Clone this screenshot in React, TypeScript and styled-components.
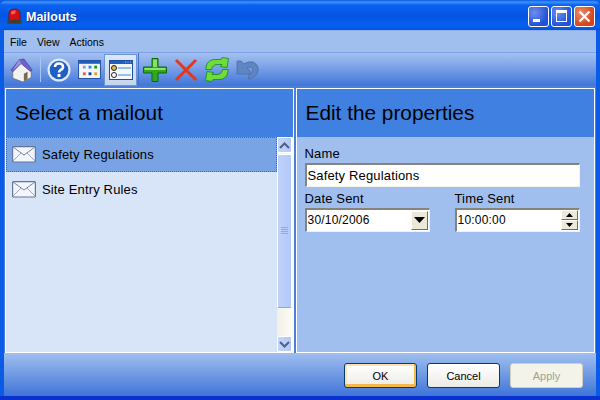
import React from "react";
import styled, { createGlobalStyle } from "styled-components";

const Global = createGlobalStyle`
  html, body { margin: 0; padding: 0; background: #0a5ce6; }
  * { box-sizing: border-box; }
`;

const App = () => {
  return (
    <>
      <Global />
      <Win>
        <TitleBar>
          <Beacon />
          <TitleText>Mailouts</TitleText>
          <Caps>
            <Cap>
              <svg width="21" height="21" viewBox="0 0 21 21">
                <rect x="5" y="13" width="7" height="3" fill="#fff" />
              </svg>
            </Cap>
            <Cap>
              <svg width="21" height="21" viewBox="0 0 21 21">
                <rect x="5.5" y="4.5" width="10" height="11" fill="none" stroke="#fff" strokeWidth="1" />
                <rect x="5" y="4" width="11" height="3" fill="#fff" />
              </svg>
            </Cap>
            <Cap $close>
              <svg width="21" height="21" viewBox="0 0 21 21">
                <path d="M5.5 5.5 L15.5 15.5 M15.5 5.5 L5.5 15.5" stroke="#fff" strokeWidth="2.4" />
              </svg>
            </Cap>
          </Caps>
        </TitleBar>
        <Client>
          <MenuBar>
            <MenuItem>File</MenuItem>
            <MenuItem>View</MenuItem>
            <MenuItem>Actions</MenuItem>
          </MenuBar>
          <ToolBar>
            <ToolGroup>
              <ToolBtn><HomeIcon /></ToolBtn>
              <Sep />
              <ToolBtn><HelpIcon /></ToolBtn>
              <ToolBtn><GridIcon /></ToolBtn>
              <ToolBtn $on><FormIcon /></ToolBtn>
            </ToolGroup>
            <ToolGroup>
              <ToolBtn><PlusIcon /></ToolBtn>
              <ToolBtn><CrossIcon /></ToolBtn>
              <ToolBtn><RefreshIcon /></ToolBtn>
              <ToolBtn><UndoIcon /></ToolBtn>
            </ToolGroup>
          </ToolBar>
          <Panels>
            <LeftPanel>
              <Heading>Select a mailout</Heading>
              <ListWrap>
                <List>
                  <Row $selected>
                    <Envelope />
                    <span>Safety Regulations</span>
                  </Row>
                  <Row>
                    <Envelope />
                    <span>Site Entry Rules</span>
                  </Row>
                </List>
                <Scroll>
                  <ScrollBtn>
                    <svg width="13" height="9" viewBox="0 0 13 9">
                      <path d="M2 7 L6.5 2.5 L11 7" fill="none" stroke="#4d6185" strokeWidth="2" />
                    </svg>
                  </ScrollBtn>
                  <Thumb>
                    <svg width="7" height="8" viewBox="0 0 7 8">
                      <path d="M0 .5H7M0 2.5H7M0 4.5H7M0 6.5H7" stroke="#8fa9ec" strokeWidth="1" />
                    </svg>
                  </Thumb>
                  <Track />
                  <ScrollBtn>
                    <svg width="13" height="9" viewBox="0 0 13 9">
                      <path d="M2 2 L6.5 6.5 L11 2" fill="none" stroke="#4d6185" strokeWidth="2" />
                    </svg>
                  </ScrollBtn>
                </Scroll>
              </ListWrap>
            </LeftPanel>
            <RightPanel>
              <Heading>Edit the properties</Heading>
              <Form>
                <Label>Name</Label>
                <Field $mb={5}>Safety Regulations</Field>
                <TwoCols>
                  <div>
                    <Label>Date Sent</Label>
                    <Field>
                      <Digits>30/10/2006</Digits>
                      <DropBtn>
                        <svg width="11" height="6" viewBox="0 0 11 6">
                          <path d="M0 0H11L5.5 6Z" fill="#000" />
                        </svg>
                      </DropBtn>
                    </Field>
                  </div>
                  <div>
                    <Label>Time Sent</Label>
                    <Field>
                      <Digits>10:00:00</Digits>
                      <Spin>
                        <SpinBtn>
                          <svg width="7" height="4" viewBox="0 0 7 4">
                            <path d="M0 4H7L3.5 0Z" fill="#000" />
                          </svg>
                        </SpinBtn>
                        <SpinBtn>
                          <svg width="7" height="4" viewBox="0 0 7 4">
                            <path d="M0 0H7L3.5 4Z" fill="#000" />
                          </svg>
                        </SpinBtn>
                      </Spin>
                    </Field>
                  </div>
                </TwoCols>
              </Form>
            </RightPanel>
          </Panels>
          <Footer>
            <Btn $variant="default">OK</Btn>
            <Btn>Cancel</Btn>
            <Btn $variant="disabled">Apply</Btn>
          </Footer>
        </Client>
      </Win>
    </>
  );
};

export default App;

const Beacon = () => (
  <svg width="17" height="17" viewBox="0 0 17 18" style={{ flex: "none" }}>
    <path d="M2.5 13 V7 Q2.5 1 8.5 1 Q14.5 1 14.5 7 V13 Z" fill="#d41010" stroke="#5a0808" strokeWidth=".6" />
    <path d="M5 4 Q7 2 10 3 L9 6 L5 7 Z" fill="#f46060" />
    <path d="M.5 13 H16.5 L16 17 H1 Z" fill="#3f4a28" />
    <path d="M3 14 H14 V15 H3 Z" fill="#8b1010" />
  </svg>
);

const HomeIcon = () => (
  <svg width="24" height="24" viewBox="1 0 24 26">
    <path d="M3 13 L3 22 L14 26 L23 21 L23 13 L13 5 Z" fill="#f2f2f2" stroke="#666" strokeWidth=".8" />
    <path d="M15 17 L19 15 V23 L15 25 Z" fill="#7a6a50" />
    <path d="M1 13 L10 2 L15 1 L24 13 L22 14.5 L12 6 L3 15 Z" fill="#6f63c9" stroke="#4a4795" strokeWidth=".8" />
    <path d="M3 13 L12 6 L10 2 Z" fill="#9a91e0" />
  </svg>
);

const HelpIcon = () => (
  <svg width="24" height="24" viewBox="0 0 24 24">
    <circle cx="12" cy="12" r="11.5" fill="#dfe8f8" />
    <circle cx="12" cy="12" r="9.3" fill="#1f5fc4" />
    <path d="M8 9 Q8 5.5 12 5.5 Q16 5.5 16 9 Q16 11 13.5 12 Q12 13 12 14.5" fill="none" stroke="#fff" strokeWidth="2.6" />
    <rect x="10.5" y="16" width="3" height="3" fill="#fff" />
  </svg>
);

const GridIcon = () => (
  <svg width="23" height="19" viewBox="0 0 24 20">
    <rect x=".5" y=".5" width="23" height="19" fill="#f4f6fb" stroke="#1d4ea0" />
    <rect x="1" y="1" width="22" height="3" fill="#1d5fc0" />
    <rect x="5" y="6" width="3" height="3" fill="#9a9ad0" />
    <rect x="11" y="6" width="3" height="3" fill="#2f8fd0" />
    <rect x="17" y="6" width="3" height="3" fill="#12a020" />
    <rect x="5" y="13" width="3" height="3" fill="#e85a30" />
    <rect x="11" y="13" width="3" height="3" fill="#1a3f9a" />
    <rect x="17" y="13" width="3" height="3" fill="#e0a018" />
  </svg>
);

const FormIcon = () => (
  <svg width="24" height="20" viewBox="0 0 24 20">
    <rect x=".5" y=".5" width="23" height="19" fill="#f4f6fb" stroke="#1d4ea0" />
    <rect x="1" y="1" width="22" height="3" fill="#1d5fc0" />
    <path d="M16 2H17M18.5 2H19.5M21 2H22" stroke="#9fc0f0" />
    <circle cx="5" cy="8" r="2.5" fill="#e0c030" stroke="#222" />
    <circle cx="5" cy="15" r="2.5" fill="#fff" stroke="#222" />
    <path d="M9 8H22M9 15H22" stroke="#2f8fe0" strokeWidth="1" />
  </svg>
);

const PlusIcon = () => (
  <svg width="24" height="24" viewBox="0 0 24 24">
    <path d="M9 .5H15V9H23.5V15H15V23.5H9V15H.5V9H9Z" fill="#2fa81f" stroke="#0a6a10" />
    <path d="M10 1.5H14V9H10ZM1.5 10H22.5V12H1.5Z" fill="#8fe06a" />
  </svg>
);

const CrossIcon = () => (
  <svg width="24" height="24" viewBox="0 0 24 24">
    <path d="M2 2 L22 22 M22 2 L2 22" stroke="#e8361a" strokeWidth="3" />
  </svg>
);

const RefreshIcon = () => (
  <svg width="24" height="25" viewBox="0 0 24 24">
    <path d="M.8 12 C1 5 5 2 10 2 H16 L17 0 L23.5 1 L22 10 L15.5 9 L17 7 H12 C9 7 7 9 6.5 12 Z" fill="#6fdc3c" stroke="#0e8a20" strokeWidth=".8" />
    <path d="M.8 12 C1 5 5 2 10 2 H16 L17 0 L23.5 1 L22 10 L15.5 9 L17 7 H12 C9 7 7 9 6.5 12 Z" transform="rotate(180 12 12)" fill="#6fdc3c" stroke="#0e8a20" strokeWidth=".8" />
  </svg>
);

const UndoIcon = () => (
  <svg width="24" height="20" viewBox="0 0 24 20">
    <path d="M1 1 H5 L8 4 Q12 1 17 2 Q23 5 22 11 Q20 18 12 19 L13 15 Q17 13 17 9 Q15 6 11 8 L14 11 V14 H1 Z" fill="#5f86c0" stroke="#4c6f9f" strokeWidth=".8" />
  </svg>
);

const Envelope = () => (
  <svg width="24" height="17" viewBox="0 0 24 17" style={{ flex: "none" }}>
    <rect x=".6" y=".6" width="22.8" height="15.4" rx="1" fill="#f3f6fc" stroke="#66769a" strokeWidth="1.2" />
    <path d="M1 1 L12 9 L23 1" fill="none" stroke="#7a88a6" />
    <path d="M1 15 L9 7 M23 15 L15 7" fill="none" stroke="#9aa6bc" />
  </svg>
);

const Win = styled.div`
  width: 600px;
  height: 400px;
  display: flex;
  flex-direction: column;
  overflow: hidden;
  border-radius: 7px 7px 0 0;
  background: linear-gradient(to bottom, #0a5ce6 0, #0a5ce6 396px, #0831d0 396px);
  font-family: "Liberation Sans", Arial, sans-serif;
`;

const TitleBar = styled.div`
  height: 30px;
  flex: none;
  display: flex;
  align-items: center;
  padding: 3px 5px 0 6px;
  background: linear-gradient(
    to bottom,
    #0a58e0 0,
    #3d93fb 2px,
    #0a62ee 5px,
    #0455e2 16px,
    #0661f0 26px,
    #0453d8 30px
  );
`;

const TitleText = styled.div`
  margin-left: 3px;
  color: #fff;
  font-size: 12.5px;
  font-weight: bold;
  text-shadow: 1px 1px 0 #0f2f9a;
`;

const Caps = styled.div`
  margin: -1px 0 0 auto;
  display: flex;
  gap: 2px;
`;

const Cap = styled.div<{ $close?: boolean }>`
  width: 21px;
  height: 21px;
  border: 1px solid #fff;
  border-radius: 3px;
  display: flex;
  align-items: center;
  justify-content: center;
  background: ${(p) =>
    p.$close
      ? "radial-gradient(circle at 30% 30%, #ee8a68, #d5431c 70%)"
      : "radial-gradient(circle at 30% 30%, #6a8ff0, #2350d8 70%)"};
  svg {
    margin: -1px;
    flex: none;
  }
`;

const Client = styled.div`
  flex: 1;
  min-height: 0;
  margin: 0 4px 4px;
  display: flex;
  flex-direction: column;
  background: #4a7fdc;
`;

const MenuBar = styled.div`
  height: 22px;
  flex: none;
  display: flex;
  align-items: center;
  padding: 0 0 0 6px;
  gap: 10px;
  background: #a1bfee;
  border-top: 1px solid #8fb0e8;
`;

const MenuItem = styled.span`
  font-size: 10.5px;
  color: #000;
`;

const ToolBar = styled.div`
  height: 34px;
  flex: none;
  display: flex;
  background: linear-gradient(to bottom, #a3c0f0 0, #7fa4e8 40%, #3f76d8 100%);
  border-top: 1px solid #7ea2e4;
`;

const ToolGroup = styled.div`
  display: flex;
  align-items: center;
  padding: 0 2px;
  border-right: 1px solid #3f6fc8;
  &:last-child {
    border-right: 0;
    padding-left: 0;
  }
`;

const ToolBtn = styled.div<{ $on?: boolean }>`
  width: 31px;
  height: 30px;
  display: flex;
  align-items: center;
  justify-content: center;
  background: ${(p) =>
    p.$on ? "linear-gradient(to bottom, #dbe7f9, #c6d5ee)" : "transparent"};
  outline: ${(p) => (p.$on ? "1px solid #6c96dc" : "none")};
`;

const Sep = styled.div`
  width: 1px;
  height: 25px;
  margin: 0 2px 0 3px;
  background: #a9c4f0;
`;

const Panels = styled.div`
  flex: 1;
  min-height: 0;
  display: flex;
  gap: 2px;
  padding: 2px 1px 0 1px;
`;

const LeftPanel = styled.div`
  width: 289px;
  display: flex;
  flex-direction: column;
  border: 1px solid #fff;
  background: #d8e5f9;
`;

const RightPanel = styled(LeftPanel)`
  width: 300px;
  background: #a0bfee;
`;

const Heading = styled.div`
  height: 48px;
  flex: none;
  display: flex;
  align-items: center;
  padding-left: 9px;
  background: #3f80e0;
  color: #000;
  font-size: 20.8px;
`;

const ListWrap = styled.div`
  flex: 1;
  min-height: 0;
  display: flex;
`;

const List = styled.div`
  flex: 1;
  min-width: 0;
`;

const Row = styled.div<{ $selected?: boolean }>`
  height: 35px;
  display: flex;
  align-items: center;
  gap: 6px;
  padding-left: 6px;
  font-size: 13px;
  letter-spacing: 0.15px;
  color: #000;
  background: ${(p) => (p.$selected ? "#78a4e6" : "transparent")};
  outline: ${(p) => (p.$selected ? "1px dotted #a0522d" : "none")};
  outline-offset: -1px;
`;

const Scroll = styled.div`
  width: 16px;
  flex: none;
  display: flex;
  flex-direction: column;
  background: linear-gradient(to right, #f0f0e6, #fdfdf8);
`;

const ScrollBtn = styled.div`
  height: 16px;
  flex: none;
  margin-right: 1px;
  display: flex;
  align-items: center;
  justify-content: center;
  border: 1px solid #fff;
  border-radius: 2px;
  background: linear-gradient(to right, #c5d5fb, #b4c8f4);
`;

const Thumb = styled.div`
  height: 154px;
  flex: none;
  margin: 1px 1px 0 0;
  display: flex;
  align-items: center;
  justify-content: center;
  border: 1px solid #fff;
  border-bottom: 1px solid #8ea6e0;
  border-radius: 2px;
  background: linear-gradient(to right, #c0d2fb, #b2c8f8);
`;

const Track = styled.div`
  flex: 1;
`;

const Form = styled.div`
  padding: 10px 14px 0 8px;
`;

const Label = styled.div`
  font-size: 13px;
  letter-spacing: 0.15px;
  line-height: 14px;
  height: 16px;
  color: #000;
`;

const Field = styled.div<{ $mb?: number }>`
  height: 24px;
  display: flex;
  align-items: center;
  justify-content: space-between;
  margin-bottom: ${(p) => p.$mb ?? 0}px;
  padding: 0 0 1px 1px;
  background: #fff;
  border-style: solid;
  border-width: 2px 1px 1px 2px;
  border-color: #85847a #f3f3ea #f3f3ea #85847a;
  font-size: 13px;
  letter-spacing: 0.15px;
  color: #000;
`;

const Digits = styled.span`
  font-size: 12px;
  letter-spacing: 0.2px;
`;

const TwoCols = styled.div`
  display: grid;
  grid-template-columns: 125px 125px;
  column-gap: 25px;
`;

const DropBtn = styled.div`
  width: 17px;
  height: 19px;
  margin-right: 1px;
  display: flex;
  align-items: center;
  justify-content: center;
  background: #ece9d8;
  border-style: solid;
  border-width: 1px;
  border-color: #fff #716f64 #716f64 #fff;
`;

const Spin = styled.div`
  width: 17px;
  margin-right: 1px;
  display: flex;
  flex-direction: column;
`;

const SpinBtn = styled.div`
  height: 10px;
  display: flex;
  align-items: center;
  justify-content: center;
  background: #ece9d8;
  border-style: solid;
  border-width: 1px;
  border-color: #fff #716f64 #716f64 #fff;
`;

const Footer = styled.div`
  height: 43px;
  flex: none;
  display: flex;
  align-items: center;
  justify-content: flex-end;
  gap: 10px;
  padding: 2px 13px 0 0;
  background: linear-gradient(to bottom, #a0bfee 0, #7aa2e6 40%, #3f74d8 100%);
`;

const Btn = styled.div<{ $variant?: "default" | "disabled" }>`
  width: 73px;
  height: 25px;
  display: flex;
  align-items: center;
  justify-content: center;
  font-size: 11px;
  border-radius: 3px;
  color: ${(p) => (p.$variant === "disabled" ? "#a1a192" : "#000")};
  border: 1px solid ${(p) => (p.$variant === "disabled" ? "#d0cfc0" : "#003c74")};
  background: ${(p) =>
    p.$variant === "disabled"
      ? "#f4f3ea"
      : "linear-gradient(to bottom, #ffffff, #ecebe5)"};
  box-shadow: ${(p) =>
    p.$variant === "default" ? "inset -1px -2px 0 1px #f4b94a, inset 1px 1px 0 1px #fbe3b0" : "none"};
`;
